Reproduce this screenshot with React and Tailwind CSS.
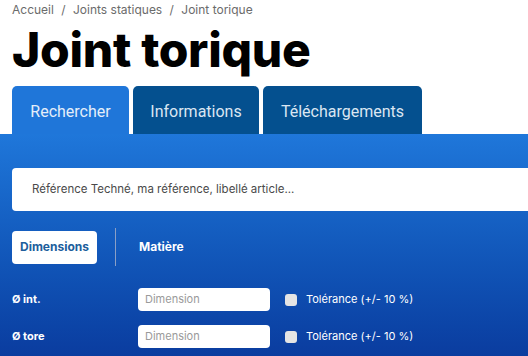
const rows = [
  { label: 'Ø int.' },
  { label: 'Ø tore' },
];

export default function App() {
  return (
    <div className="w-[528px] h-[356px] overflow-hidden bg-white" style={{ fontFamily: 'Inter, sans-serif' }}>
      {/* Breadcrumb + title */}
      <div className="px-3 pt-[2px]">
        <p className="text-[12px] leading-[16px] text-[#6b6b6b]">
          Accueil <span className="mx-[4px]">/</span> Joints statiques <span className="mx-[4px]">/</span> Joint torique
        </p>
        <h1 className="text-[48px] leading-[58px] font-extrabold text-black tracking-[-0.3px] mt-[3px]">Joint torique</h1>
      </div>

      {/* Tabs */}
      <div className="flex gap-[4px] px-3 mt-[7px]" style={{ fontFamily: 'Roboto, sans-serif' }}>
        <button className="w-[117px] h-[48px] rounded-t-[5px] bg-[#1f76d9] text-[#e4eef9] text-[16px] pt-[3px]">Rechercher</button>
        <button className="w-[126px] h-[48px] rounded-t-[5px] bg-[#04508f] text-[#dbe6f2] text-[16px] pt-[3px]">Informations</button>
        <button className="w-[159px] h-[48px] rounded-t-[5px] bg-[#04508f] text-[#dbe6f2] text-[16px] pt-[3px]">Téléchargements</button>
      </div>

      {/* Search panel */}
      <div className="bg-gradient-to-b from-[#1f77da] to-[#0a3a9d] h-[230px] pl-3 pt-[34px]">
        <div className="w-[540px] h-[43px] bg-white rounded-[4px] flex items-center pl-[20px]">
          <span className="text-[11.5px] text-[#4a4a4a]">Référence Techné, ma référence, libellé article...</span>
        </div>

        <div className="flex items-center mt-[17px]">
          <button className="w-[85px] h-[33px] bg-white rounded-[4px] text-[12px] font-bold text-[#205e9c]">Dimensions</button>
          <div className="w-px h-[38px] bg-[#8a9fc6] ml-[18px]" />
          <span className="ml-[23px] text-[12px] font-bold text-white">Matière</span>
        </div>

        <div className="mt-[22px] flex flex-col gap-[14px]">
          {rows.map((row) => (
            <div key={row.label} className="flex items-center h-[23px]">
              <span className="w-[126px] text-[11px] font-bold text-white">{row.label}</span>
              <div className="w-[132px] h-[23px] bg-white rounded-[4px] flex items-center pl-[7px]">
                <span className="text-[11px] text-[#9a9a9a]">Dimension</span>
              </div>
              <div className="w-[12px] h-[12px] bg-[#e4e4e4] rounded-[3px] ml-[15px]" />
              <span className="ml-[9px] text-[11px] text-white">Tolérance (+/- 10 %)</span>
            </div>
          ))}
        </div>
      </div>
    </div>
  );
}
